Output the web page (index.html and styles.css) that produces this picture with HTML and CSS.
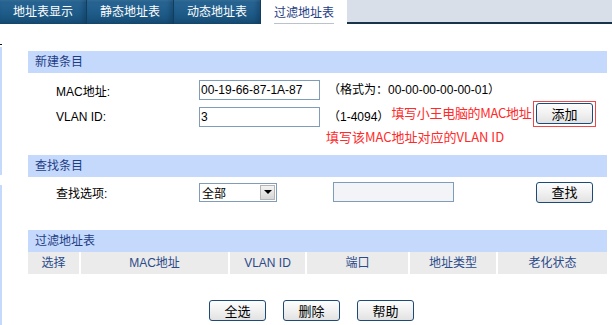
FILE: index.html
```html
<!DOCTYPE html>
<html lang="zh-CN">
<head>
    <meta charset="UTF-8">
    <meta name="viewport" content="width=device-width, initial-scale=1.0">
    <link rel="stylesheet" href="styles.css">
    <title>过滤地址表</title>
</head>
<body>
<div class="tabs">
    <div class="tab">地址表显示</div>
    <div class="tab">静态地址表</div>
    <div class="tab">动态地址表</div>
    <div class="tab tab_active"><span>过滤地址表</span></div>
    <div class="tabs-fill"></div>
</div>

<div class="page">
    <div class="edge">
        <span class="edge-mark"></span>
        <span class="edge-top"></span>
        <span class="edge-bottom"></span>
    </div>

    <div class="main">
        <!-- новая запись -->
        <div class="section">
            <div class="section-title">新建条目</div>
            <div class="row row_first">
                <div class="label">MAC地址:</div>
                <div class="field">00-19-66-87-1A-87</div>
                <div class="hint">（格式为：00-00-00-00-00-01）</div>
            </div>
            <div class="row row_vlan">
                <div class="label">VLAN ID:</div>
                <div class="field">3</div>
                <div class="hint">（1-4094）</div>
                <div class="note note_up">填写小王电脑的MAC地址</div>
                <div class="mark-box"><button class="btn">添加</button></div>
            </div>
            <div class="row-note">
                <div class="note">填写该MAC地址对应的VLAN ID</div>
            </div>
        </div>

        <!-- поиск -->
        <div class="section section_find">
            <div class="section-title">查找条目</div>
            <div class="row row_find">
                <div class="label">查找选项:</div>
                <div class="select">
                    <span class="select-text">全部</span>
                    <span class="select-arrow"><span class="select-tri"></span></span>
                </div>
                <div class="field field_gray"></div>
                <button class="btn btn_find">查找</button>
            </div>
        </div>

        <!-- таблица -->
        <div class="section section_table">
            <div class="section-title">过滤地址表</div>
            <div class="table-head">
                <div class="th">选择</div>
                <div class="th">MAC地址</div>
                <div class="th">VLAN ID</div>
                <div class="th">端口</div>
                <div class="th">地址类型</div>
                <div class="th">老化状态</div>
            </div>
            <div class="actions">
                <button class="btn">全选</button>
                <button class="btn">删除</button>
                <button class="btn">帮助</button>
            </div>
        </div>
    </div>
</div>
</body>
</html>
```

FILE: styles.css
```css
body, html {
    margin: 0;
    padding: 0;
    background: #fff;
}

body {
    width: 612px;
    height: 325px;
    overflow: hidden;
    font-family: "Liberation Sans", "Noto Sans CJK SC", sans-serif;
    font-size: 12px;
    color: #000;
}

/* вкладки */
.tabs {
    display: flex;
    height: 25px;
}

.tab {
    width: 86px;
    height: 24px;
    line-height: 24px;
    text-align: center;
    color: #fff;
    background: linear-gradient(#3a79a4 0, #286594 10%, #1d5a86 60%, #174c74 100%);
    border-right: 1px solid #123d5e;
    box-shadow: inset -3px 0 4px rgba(10, 40, 70, 0.35);
}

.tab_active {
    margin-top: 3px;
    height: 22px;
    line-height: 20px;
    background: #fff;
    border-right: none;
    border-radius: 0 3px 0 0;
    box-shadow: none;
    color: #1e3d84;
}

.tab_active span {
    display: inline-block;
    border-bottom: 1px solid #b8c3cc;
    line-height: 20px;
}

.tabs-fill {
    flex: 1;
    height: 22px;
    background: #d9dfe9;
    border-bottom: 2px solid #17344a;
}

/* страница */
.page {
    display: flex;
    height: 300px;
}

.edge {
    width: 2px;
    display: flex;
    flex-direction: column;
    padding-top: 19px;
}

.edge-mark {
    height: 1px;
    background: #111;
    margin-bottom: 2px;
}

.edge-top {
    height: 128px;
    background: #c5d9fc;
    margin-bottom: 10px;
}

.edge-bottom {
    flex: 1;
    background: #c5d9fc;
}

.main {
    margin-left: 26px;
    width: 579px;
    padding-top: 26px;
}

.section-title {
    height: 22px;
    line-height: 22px;
    padding-left: 7px;
    background: #c5d9fc;
    color: #1e3d84;
}

.row {
    display: flex;
    align-items: center;
    height: 28px;
}

.row_first {
    margin-top: 3px;
}

.row_vlan {
    height: 25px;
}

.label {
    width: 171px;
    padding-left: 28px;
    box-sizing: border-box;
    flex-shrink: 0;
}

.field {
    width: 118px;
    height: 18px;
    line-height: 18px;
    border: 1px solid #7f9db9;
    padding-left: 1px;
    box-sizing: content-box;
    background: #fff;
    flex-shrink: 0;
}

.field_gray {
    background: #f3f4f8;
    margin-left: 56px;
}

.hint {
    margin-left: 8px;
    white-space: nowrap;
    line-height: 16px;
}

.note {
    color: #ff2a2a;
    font-family: "Noto Sans CJK SC", sans-serif;
    font-size: 13px;
    white-space: nowrap;
    line-height: 15px;
}

.note_up {
    margin-left: 2px;
    margin-bottom: 8px;
    letter-spacing: -0.3px;
}

.row-note {
    height: 14px;
    padding-left: 298px;
    display: flex;
    align-items: center;
}

.mark-box {
    margin-left: auto;
    margin-right: 11px;
    margin-bottom: 5px;
    border: 1px solid #f04848;
    padding: 1px 2px 2px 2px;
    display: flex;
    flex-shrink: 0;
}

.btn {
    width: 57px;
    height: 21px;
    padding: 0;
    border: 1px solid #1e4a78;
    border-radius: 3px;
    background: linear-gradient(#fdfdfd, #f1f1f1 50%, #e2e2e2);
    font-family: "Noto Sans CJK SC", sans-serif;
    font-size: 13px;
    color: #000;
    line-height: 18px;
}

/* поиск */
.section_find {
    margin-top: 12px;
}

.row_find {
    height: 30px;
}

.select {
    width: 74px;
    height: 17px;
    border: 1px solid #7f9db9;
    display: flex;
    align-items: center;
    padding-left: 2px;
    background: #fff;
    flex-shrink: 0;
}

.select-text {
    flex: 1;
}

.select-arrow {
    width: 15px;
    height: 15px;
    margin-right: 1px;
    background: linear-gradient(#f4f4f4, #d6d6d6);
    border: 1px solid #b5b5b5;
    box-sizing: border-box;
    display: flex;
    align-items: center;
    justify-content: center;
}

.select-tri {
    width: 0;
    height: 0;
    border-left: 4px solid transparent;
    border-right: 4px solid transparent;
    border-top: 4px solid #000;
}

.btn_find {
    margin-left: auto;
    margin-right: 14px;
}

/* таблица */
.section_table {
    margin-top: 23px;
}

.table-head {
    display: grid;
    grid-template-columns: 51px 147px 75px 101px 86px 109px;
    column-gap: 2px;
    height: 22px;
}

.th {
    background: #ebebeb;
    color: #2a4a8a;
    text-align: center;
    line-height: 22px;
}

.actions {
    display: flex;
    justify-content: center;
    gap: 17px;
    margin-top: 26px;
    padding-right: 12px;
}
```
